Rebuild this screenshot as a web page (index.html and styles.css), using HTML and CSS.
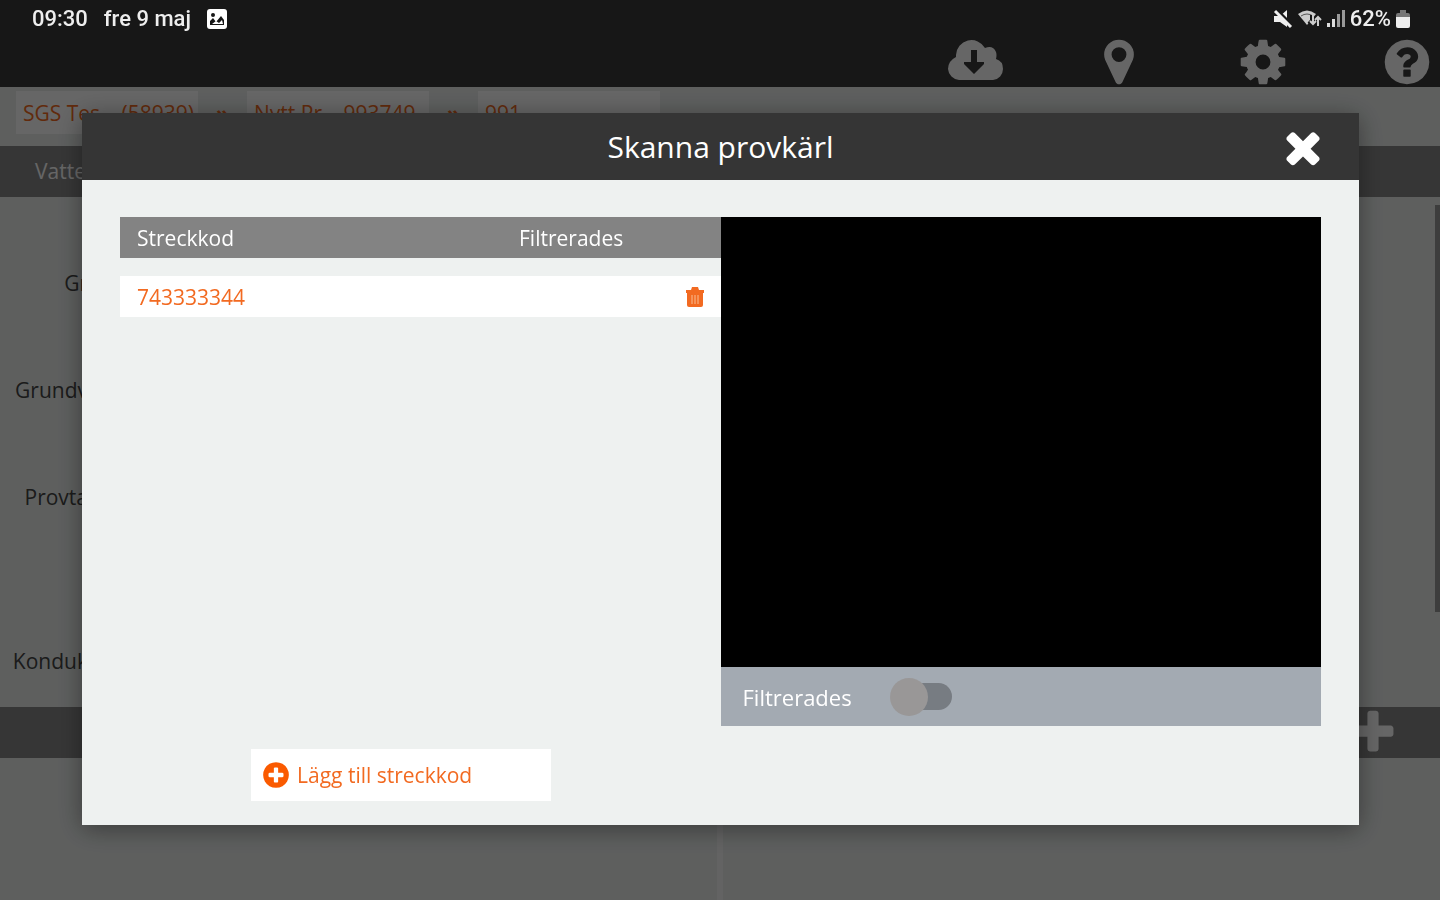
FILE: index.html
```html
<!DOCTYPE html>
<html lang="sv">
  <head>
    <meta charset="UTF-8" />
    <meta name="viewport" content="width=device-width, initial-scale=1" />
    <title>Skanna provkärl</title>
    <link rel="stylesheet" href="styles.css">
  </head>
  <body>
    <!-- Device status bar -->
    <div class="status-bar">
      <div class="status-group">
        <span>09:30</span>
        <span>fre 9 maj</span>
        <svg class="status-photo" viewBox="0 0 20 20">
          <rect x="0" y="0" width="20" height="20" rx="3" fill="#fff" />
          <path d="M3 16v-4l3-3 3 4 5-6 3 4v5z" fill="#171717" />
          <path d="M5 15l4-3 3 2 3-3 1 4z" fill="#fff" />
          <circle cx="6" cy="6" r="2" fill="#171717" />
        </svg>
      </div>
      <div class="status-group status-right">
        <svg width="20" height="20" viewBox="0 0 20 20">
          <path d="M1 7h6l7-6v17l-7-5H1z" fill="#eee" />
          <path d="M4 1l16 16" stroke="#171717" stroke-width="3" />
          <path d="M2 2l16 16" stroke="#eee" stroke-width="3" />
        </svg>
        <svg width="24" height="20" viewBox="0 0 24 20">
          <path d="M0 5q9-7 18 0l-9 11z" fill="#ccc" />
          <path d="M3 7q6-4 12 0" fill="none" stroke="#555" stroke-width="1" />
          <path d="M14 6v9M11 12l3 3 3-3M20 17V8M17 11l3-3 3 3" fill="none" stroke="#171717" stroke-width="4" />
          <path d="M15 6v9M12 12l3 3 3-3M20 17V8M17 11l3-3 3 3" fill="none" stroke="#ccc" stroke-width="2" />
        </svg>
        <svg width="18" height="20" viewBox="0 0 18 20">
          <path d="M0 14h3v4H0zM5 10h3v8H5z" fill="#ddd" />
          <path d="M10 5h3v13h-3zM15 1h3v17h-3z" fill="#999" />
        </svg>
        <span>62%</span>
        <svg width="14" height="20" viewBox="0 0 14 20">
          <path d="M4 1h6v3h2q2 0 2 2v3H0V6q0-2 2-2h2z" fill="#777" />
          <path d="M0 8h14v9q0 2-2 2H2q-2 0-2-2z" fill="#eee" />
        </svg>
      </div>
    </div>

    <div class="app">
      <header class="app-header">
        <button class="icon-btn" aria-label="Hämta">
          <svg width="56" height="52" viewBox="0 0 56 52">
            <path fill-rule="evenodd" d="M12 47A12 12 0 0 1 1 36q0-8 8-12v-2A15.500 15.500 0 0 1 38 15q8-3 11 4 1 3 0 7 7 2 7 10a11 11 0 0 1-10 11zM24 17v12h-7v2l10 10 10-10v-2h-7V17z" transform="translate(0 -3)" />
          </svg>
        </button>
        <button class="icon-btn" aria-label="Karta">
          <svg width="52" height="52" viewBox="0 0 1792 1792">
            <path d="M1152 640q0-106-75-181t-181-75-181 75-75 181 75 181 181 75 181-75 75-181zm256 0q0 109-33 179l-364 774q-16 33-47.500 52t-67.500 19-67.500-19-46.500-52l-365-774q-33-70-33-179 0-212 150-362t362-150 362 150 150 362z" />
          </svg>
        </button>
        <button class="icon-btn" aria-label="Inställningar">
          <svg width="52" height="52" viewBox="0 0 1792 1792">
            <path d="M1152 896q0-106-75-181t-181-75-181 75-75 181 75 181 181 75 181-75 75-181zm512-109v222q0 12-8 23t-20 13l-185 28q-19 54-39 91 35 50 107 138 10 12 10 25t-9 23q-27 37-99 108t-94 71q-12 0-26-9l-138-108q-44 23-91 38-16 136-29 186-7 28-36 28h-222q-14 0-24.500-8.500t-11.500-21.500l-28-184q-49-16-90-37l-141 107q-10 9-25 9-14 0-25-11-126-114-165-168-7-10-7-23 0-12 8-23 15-21 51-66.500t54-70.500q-27-50-41-99l-183-27q-13-2-21-12.500t-8-23.500v-222q0-12 8-23t19-13l186-28q14-46 39-92-40-57-107-138-10-12-10-24 0-10 9-23 26-36 98.500-107.500t94.500-71.500q13 0 26 10l138 107q44-23 91-38 16-136 29-186 7-28 36-28h222q14 0 24.500 8.500t11.500 21.500l28 184q49 16 90 37l142-107q9-9 24-9 13 0 25 10 129 119 165 170 7 8 7 22 0 12-8 23-15 21-51 66.500t-54 70.500q26 50 41 98l183 28q13 2 21 12.500t8 23.500z" />
          </svg>
        </button>
        <button class="icon-btn" aria-label="Hjälp">
          <svg width="52" height="52" viewBox="0 0 1792 1792">
            <path d="M1024 1376v-192q0-14-9-23t-23-9h-192q-14 0-23 9t-9 23v192q0 14 9 23t23 9h192q14 0 23-9t9-23zm256-672q0-88-55.500-163t-138.500-116-170-41q-243 0-371 213-15 24 8 42l132 100q7 6 19 6 16 0 25-12 53-68 86-92 34-24 86-24 48 0 85.500 26t37.500 59q0 38-20 61t-68 45q-63 28-115.500 86.500t-52.500 125.500v36q0 14 9 23t23 9h192q14 0 23-9t9-23q0-19 21.500-49.500t54.500-49.500q32-18 49-28.500t46-35 44.500-48 28-60.500 12.500-81zm384 192q0 209-103 385.500t-279.500 279.500-385.500 103-385.500-103-279.500-279.500-103-385.500 103-385.500 279.500-279.500 385.500-103 385.500 103 279.500 279.500 103 385.500z" />
          </svg>
        </button>
      </header>

      <nav class="breadcrumb">
        <a href="#">SGS Tes – (58939)</a>
        <span class="crumb-sep">»</span>
        <a href="#">Nytt Pr – 993749</a>
        <span class="crumb-sep">»</span>
        <a href="#">991</a>
      </nav>

      <div class="section-bar">Vatte</div>

      <div class="form">
        <div class="form-row">Gr</div>
        <div class="form-row">Grundv</div>
        <div class="form-row">Provta</div>
        <div class="form-row form-row-last">Konduk</div>
        <div class="scroll-thumb"></div>
      </div>

      <div class="section-bar section-add">
        <button class="icon-btn" aria-label="Lägg till">
          <svg width="52" height="52" viewBox="0 0 1792 1792">
            <path d="M1600 736v192q0 40-28 68t-68 28h-416v416q0 40-28 68t-68 28h-192q-40 0-68-28t-28-68v-416h-416q-40 0-68-28t-28-68v-192q0-40 28-68t68-28h416v-416q0-40 28-68t68-28h192q40 0 68 28t28 68v416h416q40 0 68 28t28 68z" />
          </svg>
        </button>
      </div>

      <div class="panes">
        <div class="pane"></div>
        <div class="pane"></div>
      </div>
    </div>

    <!-- Scan dialog -->
    <div class="overlay">
      <div class="modal" role="dialog" aria-labelledby="modalTitle">
        <div class="modal-header">
          <h1 id="modalTitle">Skanna provkärl</h1>
          <button class="modal-close" aria-label="Stäng">
            <svg width="50" height="50" viewBox="0 0 1792 1792">
              <path d="M1490 1322q0 40-28 68l-136 136q-28 28-68 28t-68-28l-294-294-294 294q-28 28-68 28t-68-28l-136-136q-28-28-28-68t28-68l294-294-294-294q-28-28-28-68t28-68l136-136q28-28 68-28t68 28l294 294 294-294q28-28 68-28t68 28l136 136q28 28 28 68t-28 68l-294 294 294 294q28 28 28 68z" />
            </svg>
          </button>
        </div>

        <div class="modal-body">
          <div class="codes">
            <table class="code-table">
              <thead>
                <tr>
                  <th class="col-code">Streckkod</th>
                  <th>Filtrerades</th>
                  <th class="col-action"></th>
                </tr>
              </thead>
              <tbody>
                <tr>
                  <td>743333344</td>
                  <td></td>
                  <td class="col-action">
                    <button class="delete-btn" aria-label="Ta bort">
                      <svg width="18" height="20" viewBox="0 0 18 20">
                        <path d="M0 3h5l1-3h6l1 3h5v3H0z" fill="#f26a21" />
                        <path d="M1 6h16v12q0 2-2 2H3q-2 0-2-2z" fill="#f26a21" />
                        <path d="M6 8v9M9 8v9M12 8v9" stroke="#f9bd94" stroke-width="1" />
                      </svg>
                    </button>
                  </td>
                </tr>
              </tbody>
            </table>
            <button class="add-btn">
              <svg width="30" height="30" viewBox="0 0 1792 1792">
                <path d="M1344 960v-128q0-26-19-45t-45-19h-256v-256q0-26-19-45t-45-19h-128q-26 0-45 19t-19 45v256h-256q-26 0-45 19t-19 45v128q0 26 19 45t45 19h256v256q0 26 19 45t45 19h128q26 0 45-19t19-45v-256h256q26 0 45-19t19-45zm320-64q0 209-103 385.500t-279.500 279.500-385.500 103-385.500-103-279.500-279.500-103-385.500 103-385.500 279.500-279.500 385.500-103 385.500 103 279.500 279.500 103 385.500z" />
              </svg>
              Lägg till streckkod
            </button>
          </div>

          <div class="scanner">
            <div class="camera"></div>
            <div class="filter-bar">
              <label for="filtered">Filtrerades</label>
              <input type="checkbox" id="filtered" class="switch" />
            </div>
          </div>
        </div>
      </div>
    </div>
  </body>
</html>
```

FILE: styles.css
```css
* {
  box-sizing: border-box;
}

body {
  margin: 0;
  font-family: "Open Sans", sans-serif;
  font-size: 21px;
  line-height: 28px;
  color: #444;
  background: #3a3a3a;
}

button {
  font: inherit;
  border: none;
  padding: 0;
  background: none;
  cursor: pointer;
}

svg {
  display: block;
  flex: none;
}

/* Status bar */
.status-bar {
  position: absolute;
  top: 0;
  left: 0;
  right: 0;
  z-index: 3;
  display: flex;
  justify-content: space-between;
  padding: 5px 30px 0 32px;
  font-family: Roboto, sans-serif;
  font-size: 22px;
  font-weight: 500;
  color: #eee;
}

.status-group {
  display: flex;
  align-items: center;
  gap: 16px;
}

.status-right {
  gap: 5px;
}

.status-photo {
  width: 20px;
  height: 20px;
}

/* App behind the dialog */
.app {
  display: flex;
  flex-direction: column;
  min-height: 100vh;
  background: #eaeeec;
}

.app-header {
  display: flex;
  justify-content: flex-end;
  gap: 88px;
  height: 87px;
  padding: 36px 5px 0 0;
  background: #3a3a3a;
}

.icon-btn {
  display: flex;
  justify-content: center;
  width: 56px;
  height: 52px;
  fill: #fff;
}

.breadcrumb {
  display: flex;
  height: 59px;
  padding: 4px 16px 12px;
}

.breadcrumb a {
  width: 182px;
  padding: 8px 7px 0;
  background: #fff;
  color: #f26a21;
  text-decoration: none;
  white-space: nowrap;
}

.crumb-sep {
  width: 49px;
  padding-top: 8px;
  text-align: center;
  font-weight: 700;
  color: #f26a21;
}

.section-bar {
  height: 51px;
  padding: 11px 35px;
  background: #888;
  color: #fff;
}

.section-add {
  display: flex;
  justify-content: flex-end;
  padding: 0 39px 0 0;
}

.form {
  position: relative;
  display: flex;
  flex-direction: column;
  gap: 15px;
  padding-top: 40px;
}

.form-row {
  display: flex;
  align-items: center;
  justify-content: flex-end;
  width: 88px;
  height: 92px;
}

.form-row-last {
  margin-top: 57px;
}

.scroll-thumb {
  position: absolute;
  top: 8px;
  right: 0;
  width: 5px;
  height: 407px;
  background: #999;
}

.panes {
  display: flex;
  flex: 1;
  gap: 6px;
  background: #f8f8f8;
}

.pane {
  flex: 1;
  background: #eaeeec;
}

/* Dialog */
.overlay {
  position: fixed;
  inset: 0;
  z-index: 2;
  padding: 113px 81px 0 82px;
  background: rgba(0, 0, 0, 0.6);
}

.modal {
  background: #eef1f0;
  box-shadow: 0 4px 24px rgba(0, 0, 0, 0.4);
}

.modal-header {
  display: flex;
  align-items: center;
  height: 67px;
  padding: 0 31px 0 81px;
  background: #353535;
  color: #fff;
}

.modal-header h1 {
  flex: 1;
  margin: 0;
  font-size: 30px;
  font-weight: 400;
  line-height: 40px;
  text-align: center;
}

.modal-close {
  fill: #fff;
}

.modal-body {
  display: flex;
  padding: 37px 38px 24px;
}

.codes,
.scanner {
  flex: 1;
  display: flex;
  flex-direction: column;
}

.code-table {
  width: 100%;
  margin-top: -18px;
  border-spacing: 0 18px;
  table-layout: fixed;
}

.code-table th,
.code-table td {
  height: 41px;
  padding: 0 17px;
  text-align: left;
  font-weight: 400;
}

.code-table th {
  background: #838383;
  color: #fff;
}

.code-table td {
  background: #fff;
  color: #f26a21;
}

.code-table .col-code {
  width: 382px;
}

.code-table .col-action {
  width: 52px;
}

.delete-btn {
  display: block;
}

.add-btn {
  display: flex;
  align-items: center;
  gap: 6px;
  width: 50%;
  height: 52px;
  margin: auto 0 0 131px;
  padding: 0 10px;
  background: #fff;
  color: #f26a21;
}

.add-btn svg {
  fill: #fa5a00;
}

.camera {
  aspect-ratio: 4 / 3;
  background: #000;
}

.filter-bar {
  display: flex;
  align-items: center;
  gap: 38px;
  height: 59px;
  margin-bottom: 75px;
  padding: 0 22px;
  background: #a3aab2;
  color: #fff;
  font-size: 22px;
}

.switch {
  appearance: none;
  position: relative;
  width: 62px;
  height: 38px;
  margin: 0;
  cursor: pointer;
}

.switch::before {
  content: "";
  position: absolute;
  inset: 5px 0 6px 12px;
  border-radius: 14px;
  background: #777c82;
}

.switch::after {
  content: "";
  position: absolute;
  top: 0;
  left: 0;
  width: 38px;
  height: 38px;
  border-radius: 50%;
  background: #999797;
}

.switch:checked::after {
  left: 24px;
}
```
